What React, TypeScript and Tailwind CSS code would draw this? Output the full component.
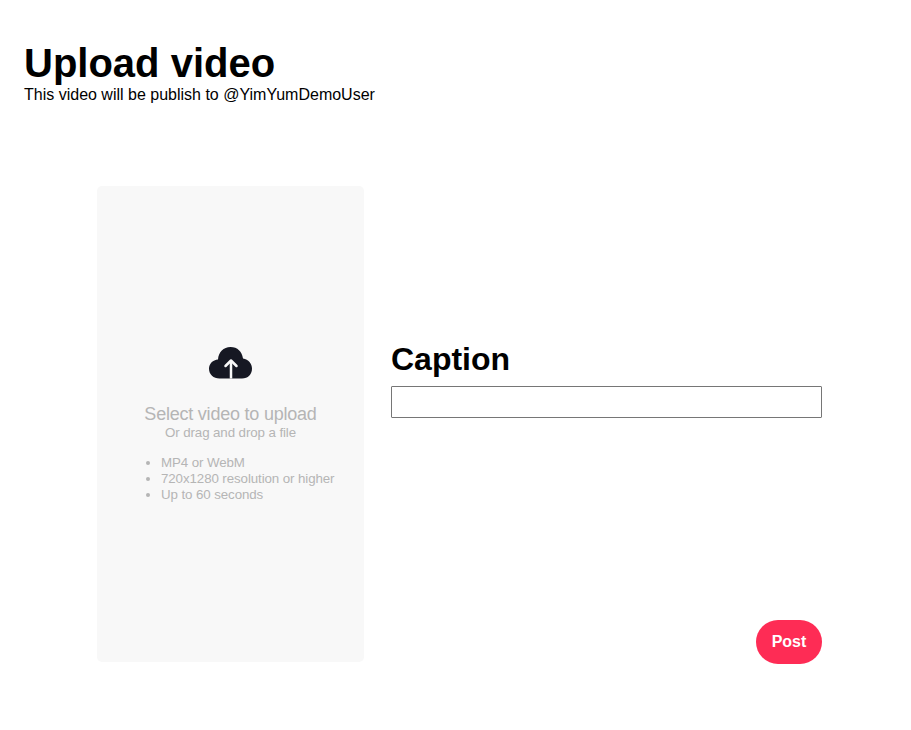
export default function App() {
  return (
    <main className="h-[730px] w-[911px] overflow-hidden bg-white px-6 pt-10 font-['Liberation_Sans',Arial,sans-serif] text-black">
      <h1 className="h-[46px] text-[40px] leading-[46px] font-bold">Upload video</h1>
      <p className="h-[18px] text-base leading-[18px]">This video will be publish to @YimYumDemoUser</p>
      <div className="mt-[82px] ml-[73px] flex h-[478px]">
        <section className="flex h-[476px] w-[267px] flex-col rounded-[5px] bg-[#f8f8f8] pt-[161px] text-[#b5b5b5]">
          <svg className="ml-[112px] h-[32px] w-[43px]" viewBox="0 0 43 32">
            <path fill="#161823" d="M10.500 31.500C4.500 31.500 0 27.500 0 21.800C0 16.500 4 13 9 12.500C9.500 5 14.500 0 21.500 0C28.500 0 33 4.500 34 11.500C39.500 12.500 43 16.500 43 21.500C43 27.500 39 31.500 33 31.500Z" />
            <path fill="none" stroke="#f8f8f8" strokeWidth="2.500" strokeLinecap="round" strokeLinejoin="round" d="M16.500 19L22 13.500L27.500 19" />
            <path fill="none" stroke="#f8f8f8" strokeWidth="2.500" d="M22 31.500V14.500" />
          </svg>
          <h2 className="mt-[25px] text-center text-[18px] leading-[20px] tracking-[-0.22px]">Select video to upload</h2>
          <p className="mt-px text-center text-[13.333px] leading-[16px] tracking-[-0.1px]">Or drag and drop a file</p>
          <ul className="mt-[14px] ml-[64px] list-disc text-[13.333px] leading-[16px] tracking-[-0.1px]">
            <li>MP4 or WebM</li>
            <li>720x1280 resolution or higher</li>
            <li>Up to 60 seconds</li>
          </ul>
        </section>
        <section className="ml-[27px] flex w-[431px] flex-col pt-[154px]">
          <label htmlFor="caption" className="h-[46px] text-[32px] leading-[38px] font-bold">Caption</label>
          <input id="caption" className="h-8 w-full rounded-[1px] border border-[#767676] bg-white px-2 outline-none" />
          <button className="mt-auto h-11 w-[66px] self-end rounded-full bg-[#fe2c55] text-base font-bold text-white">Post</button>
        </section>
      </div>
    </main>
  );
}
